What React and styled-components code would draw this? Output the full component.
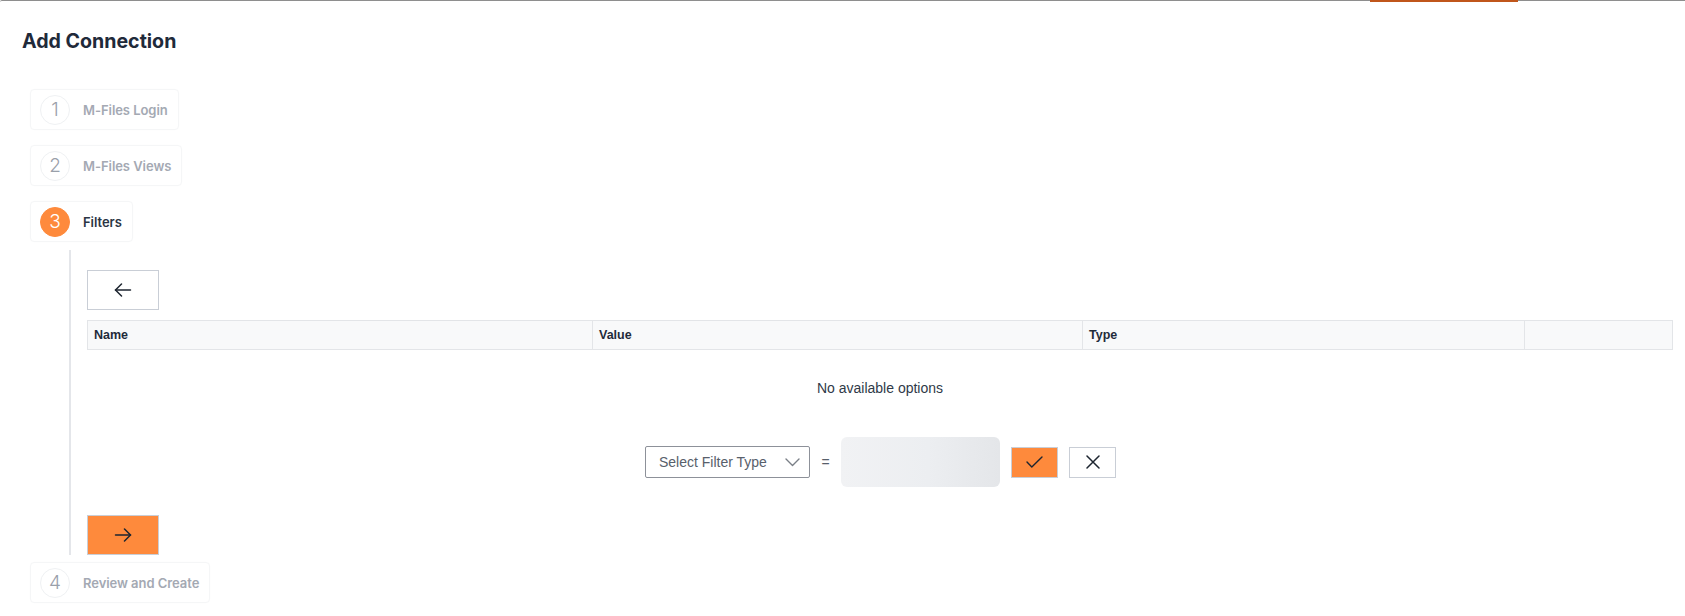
import React from "react";
import styled, { createGlobalStyle } from "styled-components";

const GlobalStyle = createGlobalStyle`
  html, body { margin: 0; padding: 0; background: #ffffff; }
  * { box-sizing: border-box; }
`;

const ORANGE = "#fe8a3c";

const Page = styled.div`
  width: 1685px;
  height: 616px;
  background: #fff;
  font-family: Inter, "Noto Sans", sans-serif;
  overflow: hidden;
`;

const TopRule = styled.div`
  display: flex;
  height: 2px;
`;

const RuleSegment = styled.div`
  flex: ${(p) => (p.$width ? `0 0 ${p.$width}px` : "1 1 auto")};
  border-top: 1px solid ${(p) => (p.$active ? "#c0561b" : "#8e8e8e")};
  background: ${(p) => (p.$active ? "#c0561b" : "transparent")};
  border-radius: ${(p) => (p.$first ? "3px 0 0 0" : "0")};
`;

const Title = styled.h1`
  margin: 0;
  padding: 27px 0 0 22px;
  font-size: 19.6px;
  line-height: 24px;
  font-weight: 700;
  color: #1f2a3a;
`;

const Steps = styled.div`
  display: flex;
  flex-direction: column;
  align-items: flex-start;
  padding: 36px 12px 0 30px;
`;

const StepBox = styled.div`
  display: flex;
  align-items: center;
  gap: 13px;
  height: 41px;
  padding: 0 10px 0 9px;
  border: 1px solid #f5f6f7;
  border-radius: 4px;
  box-shadow: 0 0 2px rgba(0, 0, 0, 0.015);
  margin-top: ${(p) => p.$mt || 0}px;
`;

const StepCircle = styled.div`
  width: 30px;
  height: 30px;
  border-radius: 50%;
  display: flex;
  align-items: center;
  justify-content: center;
  font-size: 19px;
  font-weight: 300;
  color: ${(p) => (p.$active ? "#fff" : "#9aa0aa")};
  background: ${(p) => (p.$active ? ORANGE : "#fff")};
  border: 1px solid ${(p) => (p.$active ? ORANGE : "#eff1f3")};
`;

const StepLabel = styled.span`
  font-size: 13px;
  font-weight: 600;
  letter-spacing: -0.05px;
  color: ${(p) => (p.$active ? "#2b3544" : "#a4a9b3")};
`;

const StepBody = styled.div`
  align-self: stretch;
  margin: 8px 0 0 39px;
  border-left: 2px solid #e4e6ea;
  padding: 20px 0 0 16px;
  display: flex;
  flex-direction: column;
  align-items: flex-start;
`;

const NavButton = styled.button`
  width: 72px;
  height: 40px;
  display: flex;
  align-items: center;
  justify-content: center;
  border: 1px solid #c9ced6;
  background: ${(p) => (p.$primary ? ORANGE : "#fff")};
  border-radius: 0;
  padding: 0;
  margin-top: ${(p) => p.$mt || 0}px;
  color: #1d2530;
`;

const Table = styled.div`
  align-self: stretch;
  margin-top: 10px;
`;

const HeaderRow = styled.div`
  display: grid;
  grid-template-columns: 504px 490px 442px 1fr;
  height: 30px;
  background: #f8f9fa;
  border: 1px solid #e3e5e8;
`;

const HeaderCell = styled.div`
  display: flex;
  align-items: center;
  padding-left: 6px;
  border-left: ${(p) => (p.$first ? "none" : "1px solid #e3e5e8")};
  font-family: "Liberation Sans", Arial, sans-serif;
  font-size: 12.5px;
  font-weight: 700;
  color: #1f2b3a;
`;

const EmptyMessage = styled.div`
  padding-top: 30px;
  text-align: center;
  font-family: "Liberation Sans", Arial, sans-serif;
  font-size: 14px;
  line-height: 16px;
  color: #2f3a48;
`;

const FilterRow = styled.div`
  display: flex;
  align-items: center;
  justify-content: center;
  gap: 11px;
  margin-top: 41px;
  height: 50px;
  padding-left: 1px;
`;

const Select = styled.div`
  width: 165px;
  height: 32px;
  display: flex;
  align-items: center;
  justify-content: space-between;
  padding: 0 9px 0 13px;
  border: 1px solid #8d9199;
  border-radius: 2px;
  font-family: "Liberation Sans", Arial, sans-serif;
  font-size: 14px;
  color: #58606b;
`;

const Equals = styled.span`
  font-family: "Liberation Sans", Arial, sans-serif;
  font-size: 14px;
  color: #58606b;
  width: 9px;
  text-align: center;
`;

const Skeleton = styled.div`
  width: 159px;
  height: 50px;
  border-radius: 6px;
  background: linear-gradient(90deg, #f1f2f4 0%, #eceef1 55%, #e4e6e9 100%);
`;

const ActionButton = styled.button`
  width: 47px;
  height: 31px;
  display: flex;
  align-items: center;
  justify-content: center;
  padding: 0;
  border: 1px solid #c9ced6;
  border-radius: 0;
  background: ${(p) => (p.$primary ? ORANGE : "#fff")};
  color: #1d2530;
`;

const ArrowIcon = ({ dir = "left" }) => (
  <svg width="18" height="14" viewBox="0 0 18 14" fill="none">
    <g
      stroke="#1d2530"
      strokeWidth="1.5"
      strokeLinecap="round"
      strokeLinejoin="round"
      transform={dir === "right" ? "translate(18 0) scale(-1 1)" : undefined}
    >
      <path d="M1.5 7H16.5" />
      <path d="M7.5 1L1.5 7L7.5 13" />
    </g>
  </svg>
);

const CheckIcon = () => (
  <svg width="17" height="12" viewBox="0 0 17 12" fill="none">
    <path d="M1 6L5.8 11L16 1" stroke="#1d2530" strokeWidth="1.4" strokeLinecap="round" strokeLinejoin="round" />
  </svg>
);

const CloseIcon = () => (
  <svg width="14" height="14" viewBox="0 0 14 14" fill="none">
    <path d="M1 1L13 13M13 1L1 13" stroke="#1d2530" strokeWidth="1.5" strokeLinecap="round" />
  </svg>
);

const ChevronIcon = () => (
  <svg width="15" height="9" viewBox="0 0 15 9" fill="none">
    <path d="M1 1L7.5 7.5L14 1" stroke="#7a7f87" strokeWidth="1.4" strokeLinecap="round" strokeLinejoin="round" />
  </svg>
);

const Step = ({ n, label, active, mt }) => (
  <StepBox $mt={mt}>
    <StepCircle $active={active}>{n}</StepCircle>
    <StepLabel $active={active}>{label}</StepLabel>
  </StepBox>
);

export default function App() {
  return (
    <>
      <GlobalStyle />
      <Page>
        <TopRule>
          <RuleSegment $width={1370} $first />
          <RuleSegment $width={148} $active />
          <RuleSegment />
        </TopRule>
        <Title>Add Connection</Title>
        <Steps>
          <Step n="1" label="M-Files Login" />
          <Step n="2" label="M-Files Views" mt={15} />
          <Step n="3" label="Filters" active mt={15} />
          <StepBody>
            <NavButton aria-label="Back">
              <ArrowIcon dir="left" />
            </NavButton>
            <Table>
              <HeaderRow>
                <HeaderCell $first>Name</HeaderCell>
                <HeaderCell>Value</HeaderCell>
                <HeaderCell>Type</HeaderCell>
                <HeaderCell />
              </HeaderRow>
              <EmptyMessage>No available options</EmptyMessage>
              <FilterRow>
                <Select>
                  <span>Select Filter Type</span>
                  <ChevronIcon />
                </Select>
                <Equals>=</Equals>
                <Skeleton />
                <ActionButton $primary aria-label="Apply">
                  <CheckIcon />
                </ActionButton>
                <ActionButton aria-label="Cancel">
                  <CloseIcon />
                </ActionButton>
              </FilterRow>
            </Table>
            <NavButton $primary $mt={28} aria-label="Next">
              <ArrowIcon dir="right" />
            </NavButton>
          </StepBody>
          <Step n="4" label="Review and Create" mt={7} />
        </Steps>
      </Page>
    </>
  );
}
